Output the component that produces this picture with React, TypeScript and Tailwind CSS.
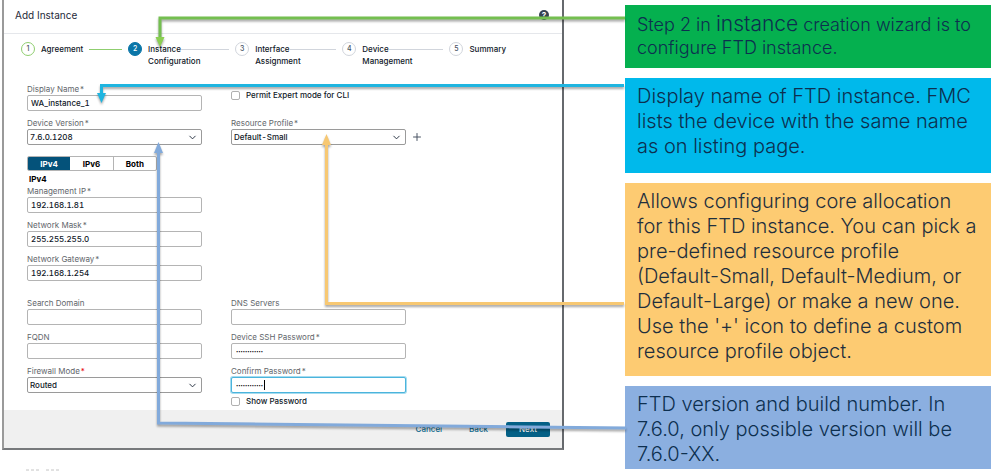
import type { ReactNode } from "react";
import { ChevronDown, Plus } from "lucide-react";

const steps = [
  { label: ["Agreement"], state: "done" },
  { label: ["Instance", "Configuration"], state: "current" },
  { label: ["Interface", "Assignment"], state: "next" },
  { label: ["Device", "Management"], state: "next" },
  { label: ["Summary"], state: "next" },
];

const circleStyles: Record<string, string> = {
  done: "border-[#8fce6f] text-gray-600",
  current: "border-[#0b76a8] bg-[#0b76a8] text-white",
  next: "border-gray-300 text-gray-600",
};

type FieldProps = {
  id: string;
  label: string;
  required?: boolean;
  redMark?: boolean;
  children: ReactNode;
};

function Field({ id, label, required, redMark, children }: FieldProps) {
  return (
    <div className="flex flex-col">
      <label htmlFor={id} className="h-3 leading-3 text-[#62666b] whitespace-nowrap">
        {label}
        {required && <span className={redMark ? "text-red-600 ml-px" : "ml-px"}>*</span>}
      </label>
      {children}
    </div>
  );
}

function TextField({
  value = "",
  type = "text",
  ...field
}: { id: string; label: string; required?: boolean; value?: string; type?: string }) {
  return (
    <Field {...field}>
      <input
        id={field.id}
        type={type}
        defaultValue={value}
        className={
          type === "password"
            ? "h-4 w-full rounded-xs border border-[#b4b4b4] bg-white px-1 text-[4px] text-black"
            : "h-4 w-full rounded-xs border border-[#b4b4b4] bg-white px-[3px] font-medium tabular-nums text-gray-900"
        }
      />
    </Field>
  );
}

function SelectField({
  value,
  ...field
}: { id: string; label: string; required?: boolean; redMark?: boolean; value: string }) {
  return (
    <Field {...field}>
      <div className="relative">
        <select
          id={field.id}
          defaultValue={value}
          className="block h-4 w-full appearance-none rounded-xs border border-[#9a9a9a] bg-white px-0.5 font-medium tabular-nums text-gray-900"
        >
          <option>{value}</option>
        </select>
        <ChevronDown size={11} className="pointer-events-none absolute right-1 top-[3px] text-gray-800" />
      </div>
    </Field>
  );
}

function Check({ id, label }: { id: string; label: string }) {
  return (
    <div className="flex h-3 items-center gap-[6px]">
      <input
        id={id}
        type="checkbox"
        className="size-[9px] shrink-0 appearance-none rounded-xs border border-[#b0b0b0] bg-white"
      />
      <label htmlFor={id} className="font-medium text-gray-900 whitespace-nowrap">
        {label}
      </label>
    </div>
  );
}

function Stepper() {
  return (
    <ol className="flex pl-[17px] pt-2 font-medium text-gray-900">
      {steps.map((step, i) => (
        <li key={step.label[0]} className="flex w-[19.8%] items-start gap-[6px]">
          <span
            className={`flex size-[14px] shrink-0 items-center justify-center rounded-full border text-[7px] ${circleStyles[step.state]}`}
          >
            {i + 1}
          </span>
          <div className="flex-1 pt-px leading-3">
            <div className="flex items-center">
              <span>{step.label[0]}</span>
              {i < steps.length - 1 && (
                <span
                  className={
                    step.state === "done"
                      ? "ml-[6px] mr-[6px] h-px flex-1 bg-[#8fce6f]"
                      : "mr-[6px] h-px flex-1 bg-gray-300"
                  }
                />
              )}
            </div>
            {step.label[1]}
          </div>
        </li>
      ))}
    </ol>
  );
}

function Dialog() {
  return (
    <section className="flex flex-col border-x-2 border-b-2 border-l-[#9a9a9a] border-r-[#66696d] border-b-[#77797c] bg-white text-[8px] leading-3">
      <header className="flex h-[34px] items-center justify-between border-b border-gray-200 pb-[3px] pl-[11px] pr-[13px]">
        <h1 className="text-[10px] text-gray-800">Add Instance</h1>
        <button aria-label="Help" className="flex size-[10px] items-center justify-center rounded-full bg-gray-700 text-[8px] font-bold text-white">
          ?
        </button>
      </header>

      <Stepper />

      <form className="grid grid-cols-[175fr_195fr] gap-x-[29px] pl-[23px] pr-[136px] pt-4">
        <div className="flex flex-col gap-[6px]">
          <TextField id="name" label="Display Name" required value="WA_instance_1" />
          <SelectField id="version" label="Device Version" required value="7.6.0.1208" />
        </div>
        <div className="flex flex-col gap-4 pt-[6px]">
          <Check id="expert" label="Permit Expert mode for CLI" />
          <div className="flex items-end gap-[5px]">
            <div className="flex-1">
              <SelectField id="profile" label="Resource Profile" required value="Default-Small" />
            </div>
            <button type="button" aria-label="Add profile" className="flex h-4 w-[15px] items-center text-gray-600">
              <Plus size={12} strokeWidth={2} />
            </button>
          </div>
        </div>

        <div className="flex flex-col pt-[11px]">
          <div className="flex h-[15px] w-[130px] overflow-hidden rounded-xs border border-[#b4b4b4] font-bold">
            <button type="button" className="flex-1 bg-[#04527a] text-white">IPv4</button>
            <button type="button" className="flex-1 border-r border-[#b4b4b4]">IPv6</button>
            <button type="button" className="flex-1">Both</button>
          </div>
          <h2 className="mt-[2px] pl-0.5 font-bold text-black">IPv4</h2>
          <div className="flex flex-col gap-[6px]">
            <TextField id="ip" label="Management IP" required value="192.168.1.81" />
            <TextField id="mask" label="Network Mask" required value="255.255.255.0" />
            <TextField id="gateway" label="Network Gateway" required value="192.168.1.254" />
          </div>
        </div>
        <div />

        <div className="flex flex-col gap-[6px] pt-4">
          <TextField id="domain" label="Search Domain" />
          <TextField id="fqdn" label="FQDN" />
          <SelectField id="mode" label="Firewall Mode" required redMark value="Routed" />
        </div>
        <div className="flex flex-col gap-[6px] pr-5 pt-4">
          <TextField id="dns" label="DNS Servers" />
          <TextField id="ssh" label="Device SSH Password" required type="password" value="cisco1234567" />
          <Field id="confirm" label="Confirm Password" required>
            <div className="relative">
              <input
                id="confirm"
                type="password"
                defaultValue="cisco1234567"
                className="block h-4 w-full rounded-xs border border-[#4bb4dc] bg-white px-1 text-[4px] text-black ring-1 ring-[#a5dcf0]"
              />
              <span className="absolute left-[33px] top-[3px] h-[10px] w-px bg-black" />
            </div>
          </Field>
          <div className="-mt-1">
            <Check id="show" label="Show Password" />
          </div>
        </div>
      </form>

      <footer className="mt-[3px] flex h-[38px] items-center justify-end bg-[#f0f0f0] pr-3 font-medium text-[#0b6a8f]">
        <button className="mr-[27px]">Cancel</button>
        <button className="mr-[18px]">Back</button>
        <button className="h-[15px] w-11 rounded-xs bg-[#046086] text-white">Next</button>
      </footer>
    </section>
  );
}

function Notes() {
  return (
    <aside className="flex flex-col gap-[10px] pt-[5px] pr-2 text-[20px] leading-[25px] font-light whitespace-pre text-[#0d2f4f]">
      <p className="bg-[#05b04f] px-3 pt-2 pb-[9px] text-[18px] leading-[23px]">
        Step 2 in <span className="text-[21px] leading-none">instance</span> creation wizard is to{"\n"}
        configure FTD instance.
      </p>
      <p className="bg-[#00b9eb] px-3 pt-[6px] pb-[14px]">
        {"Display name of FTD instance. FMC\nlists the device with the same name\nas on listing page."}
      </p>
      <p className="bg-[#fdcb72] px-3 pt-[6px] pb-3 text-[#1f2f3d]">
        {"Allows configuring core allocation\nfor this FTD instance. You can pick a\npre-defined resource profile\n(Default-Small, Default-Medium, or\nDefault-Large) or make a new one.\nUse the '+' icon to define a custom\nresource profile object."}
      </p>
      <p className="bg-[#8bafe0] px-3 pt-[6px] pb-0.5">
        {"FTD version and build number. In\n7.6.0, only possible version will be\n7.6.0-XX."}
      </p>
    </aside>
  );
}

// Connector lines from each note to the control that it describes
function Arrows() {
  return (
    <svg
      viewBox="0 0 999 471"
      preserveAspectRatio="none"
      className="pointer-events-none absolute inset-0 h-full w-full drop-shadow-[0_2px_1px_rgba(0,0,0,0.35)]"
      fill="none"
      strokeWidth="3"
    >
      <path d="M625 18H160V39" stroke="#74bf50" />
      <path d="M155.500 37h9l-4.500 10z" fill="#8bcf52" />
      <path d="M624 85.500H101.500V95" stroke="#1fb5e0" />
      <path d="M97 93h9l-4.500 10z" fill="#1fb5e0" />
      <path d="M624 303.500H326.500V143" stroke="#f7c873" />
      <path d="M322 145h9l-4.500-11z" fill="#f7c873" />
      <path d="M626 428L158.500 423V152" stroke="#82aadb" />
      <path d="M154 153h9l-4.500-11z" fill="#82aadb" />
    </svg>
  );
}

export default function App() {
  return (
    <main className="relative overflow-hidden bg-white font-['Inter','Liberation_Sans',sans-serif]">
      <div className="grid grid-cols-[562fr_374fr] items-start gap-x-[61px] pl-0.5">
        <Dialog />
        <Notes />
      </div>
      <div className="h-[2px] pl-[26px]">
        <svg className="block" width="34" height="2" stroke="#c4c4c4" strokeDasharray="3 2">
          <path d="M0 1H14M20 1H33" />
        </svg>
      </div>
      <Arrows />
    </main>
  );
}
